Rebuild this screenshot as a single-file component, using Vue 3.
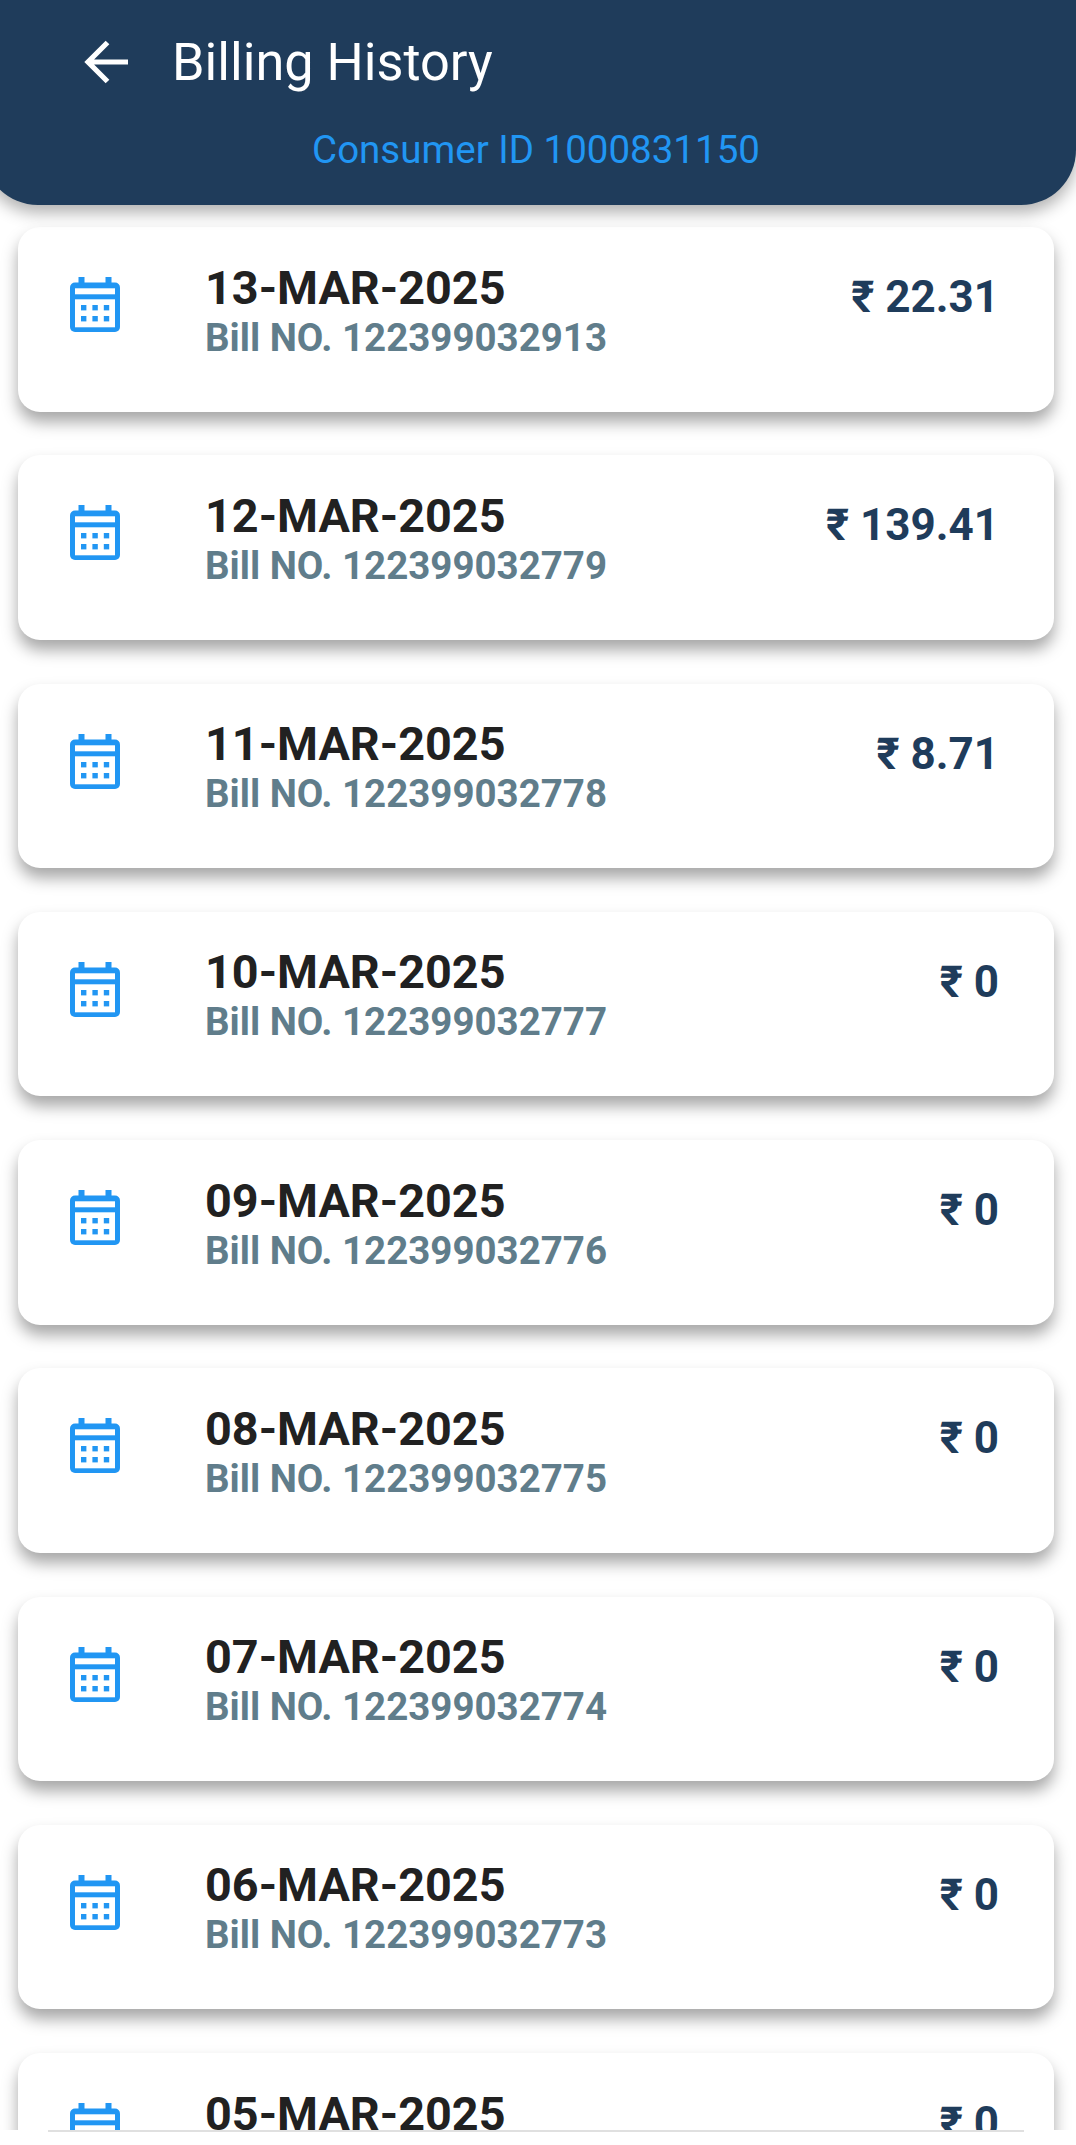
<template>
  <div class="screen">
    <header class="topbar">
      <div class="title-row">
        <svg class="back" viewBox="0 0 66 66">
          <path d="M54 32H14M33.5 12.5L14 32l19.5 19.5" fill="none" stroke="#fff" stroke-width="5.2" />
        </svg>
        <h1>Billing History</h1>
      </div>
      <p class="consumer">Consumer ID 1000831150</p>
    </header>

    <div class="bills">
      <div class="bill-card" v-for="bill in bills" :key="bill.no">
        <svg class="cal" viewBox="0 0 50 55">
          <rect x="8.5" y="0" width="6" height="8" fill="#2196f3" />
          <rect x="35.5" y="0" width="6" height="8" fill="#2196f3" />
          <rect x="0" y="5.5" width="50" height="49.5" rx="5" fill="#2196f3" />
          <rect x="5" y="11.3" width="40" height="6" fill="#fff" />
          <rect x="5" y="22.3" width="40" height="28" fill="#fff" />
          <rect v-for="d in dots" :key="d.x + '-' + d.y" :x="d.x" :y="d.y" width="5.4" height="5.4" fill="#2196f3" />
        </svg>
        <div class="info">
          <div class="date">{{ bill.date }}</div>
          <div class="no">Bill NO. {{ bill.no }}</div>
        </div>
        <div class="amount">₹ {{ bill.amount }}</div>
      </div>
    </div>

    <div class="bottom"></div>
  </div>
</template>

<script setup>
const bills = [
  { date: "13-MAR-2025", no: "122399032913", amount: "22.31" },
  { date: "12-MAR-2025", no: "122399032779", amount: "139.41" },
  { date: "11-MAR-2025", no: "122399032778", amount: "8.71" },
  { date: "10-MAR-2025", no: "122399032777", amount: "0" },
  { date: "09-MAR-2025", no: "122399032776", amount: "0" },
  { date: "08-MAR-2025", no: "122399032775", amount: "0" },
  { date: "07-MAR-2025", no: "122399032774", amount: "0" },
  { date: "06-MAR-2025", no: "122399032773", amount: "0" },
  { date: "05-MAR-2025", no: "122399032772", amount: "0" },
];

const dots = [];
for (const y of [28, 39]) {
  for (const x of [11, 22.4, 33.8]) {
    dots.push({ x, y });
  }
}
</script>

<style>
html,
body {
  margin: 0;
  background: #fff;
}
</style>

<style scoped>
.screen {
  width: 1076px;
  height: 2145px;
  display: flex;
  flex-direction: column;
  overflow: hidden;
  background: #fff;
  font-family: Roboto, sans-serif;
}

/* sits a bit past the left edge, so the left corner looks cut off */
.topbar {
  position: relative;
  z-index: 2;
  flex: none;
  height: 205px;
  margin-left: -17px;
  box-sizing: border-box;
  padding-top: 30px;
  background: #1f3c5b;
  border-radius: 0 0 55px 55px;
  box-shadow: 0 8px 16px rgba(0, 0, 0, 0.3);
}

.title-row {
  display: flex;
  align-items: center;
  height: 66px;
  padding-left: 91px;
}

.back {
  width: 66px;
  height: 66px;
  flex: none;
}

h1 {
  margin: 0 0 0 32px;
  font-size: 52.25px;
  font-weight: 400;
  line-height: 66px;
  color: #fff;
}

.consumer {
  margin: 29px 0 0;
  padding-left: 13px;
  text-align: center;
  font-size: 38.5px;
  line-height: 50px;
  color: #2196f3;
}

.bills {
  flex: 1;
  min-height: 0;
  overflow: hidden;
  padding: 22px 22px 0 18px;
  display: flex;
  flex-direction: column;
  gap: 43.75px;
}

.bill-card {
  flex: none;
  height: 184.5px;
  box-sizing: border-box;
  padding: 50px 55px 0 52px;
  display: flex;
  align-items: flex-start;
  background: #fff;
  border-radius: 22px;
  box-shadow: 0 10px 16px rgba(0, 0, 0, 0.35);
}

.cal {
  flex: none;
  width: 50px;
  height: 55px;
}

.info {
  margin-left: 85px;
  flex: 1;
  margin-top: -16.5px;
}

.date {
  font-size: 46.75px;
  font-weight: 700;
  line-height: 55px;
  color: #212121;
}

.no {
  font-size: 38.5px;
  font-weight: 700;
  line-height: 44px;
  color: #607d8b;
}

.amount {
  font-size: 44px;
  font-weight: 700;
  line-height: 50px;
  margin-top: -5px;
  color: #1f3c5b;
}

.bottom {
  flex: none;
  height: 13px;
  margin: 0 52px 0 48px;
  border-top: 2px solid #e0e0e0;
  background: #fff;
  position: relative;
  z-index: 2;
}
</style>
